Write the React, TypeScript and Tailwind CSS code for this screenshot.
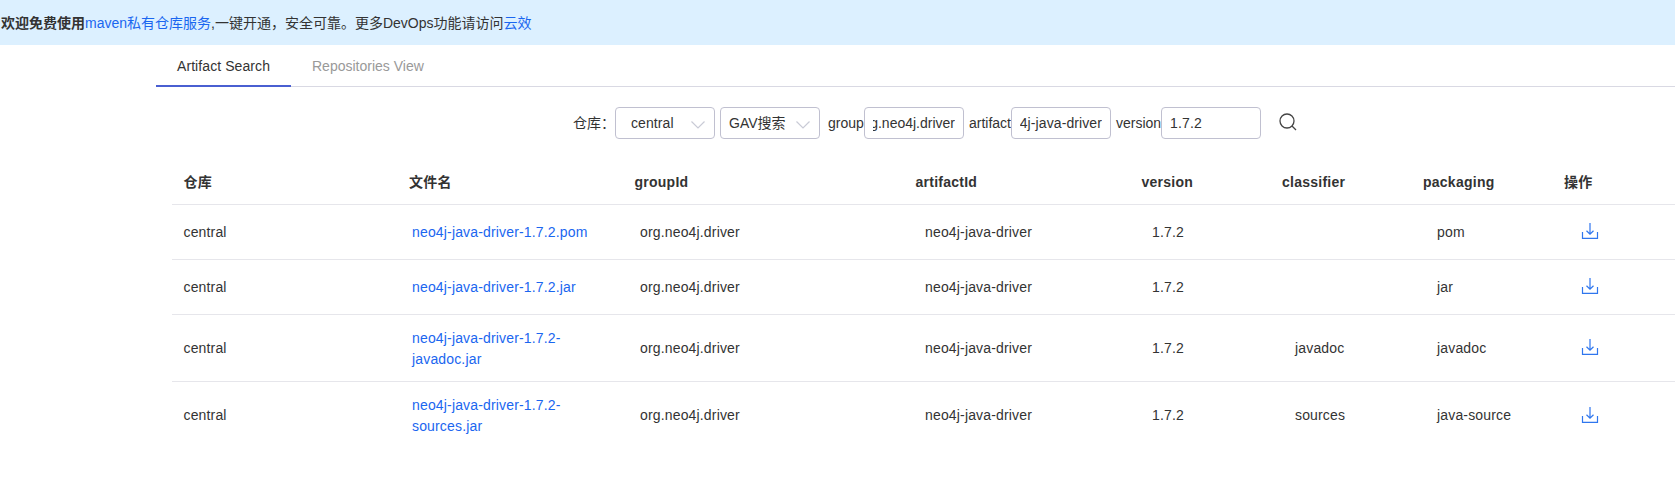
import React from "react";

const headerCols = "grid grid-cols-[225.5px_225.5px_281px_226px_140.5px_141px_141px_1fr]";
const bodyCols = "grid grid-cols-[228px_228px_285px_227px_143px_142px_142px_1fr]";

const headers = ["仓库", "文件名", "groupId", "artifactId", "version", "classifier", "packaging", "操作"];

const rows = [
  { file: "neo4j-java-driver-1.7.2.pom", classifier: "", packaging: "pom" },
  { file: "neo4j-java-driver-1.7.2.jar", classifier: "", packaging: "jar" },
  { file: "neo4j-java-driver-1.7.2-javadoc.jar", classifier: "javadoc", packaging: "javadoc" },
  { file: "neo4j-java-driver-1.7.2-sources.jar", classifier: "sources", packaging: "java-source" },
];

function Chevron() {
  return (
    <svg width="14" height="8" viewBox="0 0 14 8" fill="none" stroke="#c9cbd6" strokeWidth="1.2" className="mt-[3px] shrink-0">
      <path d="M0.5 0.5 L7 7 L13.5 0.5" />
    </svg>
  );
}

function DownloadIcon() {
  return (
    <svg width="18" height="17" viewBox="0 0 18 17" fill="none" stroke="#2f76ee" strokeWidth="1.2">
      <path d="M1.5 9 V15.4 H16.5 V9" />
      <path d="M9 0 V11 M5.5 7.8 L9 11.2 L12.5 7.8" />
    </svg>
  );
}

function Select({ value, className }: { value: string; className: string }) {
  return (
    <div className={`flex h-8 w-[100px] items-center justify-between rounded border border-[#c0c0d0] pr-[9px] ${className}`}>
      <span>{value}</span>
      <Chevron />
    </div>
  );
}

function Field({ value, clipped }: { value: string; clipped?: boolean }) {
  return (
    <div className="flex h-8 w-[100px] items-center rounded border border-[#c0c0d0] bg-white px-2">
      <div className={`flex w-full overflow-hidden whitespace-nowrap ${clipped ? "justify-end" : ""}`}>
        <span className="shrink-0">{value}</span>
      </div>
    </div>
  );
}

export default function App() {
  return (
    <div className="h-[484px] w-full overflow-hidden bg-white font-['Liberation_Sans','Noto_Sans_CJK_SC',sans-serif] text-sm leading-[21px] text-[#333]">
      <div className="flex h-[45px] items-center bg-[#dcf0ff] pt-0.5 pl-px">
        <p>
          <b>欢迎免费使用</b>
          <a className="text-[#1a66f0]">maven私有仓库服务</a>,一键开通，安全可靠。更多DevOps功能请访问
          <a className="text-[#1a66f0]">云效</a>
        </p>
      </div>

      <div className="ml-[156px] flex h-[42px] border-b border-[#d9d9e3]">
        <div className="flex h-[42px] w-[135px] justify-center border-b-2 border-[#4a5fd1] pt-[11px] tracking-[0.08px]">Artifact Search</div>
        <div className="pt-[11px] pl-[21px] text-[#999]">Repositories View</div>
      </div>

      <div className="mt-5 ml-[573px] flex h-8 items-center">
        <span className="w-[42px]">仓库：</span>
        <Select value="central" className="pl-[15px] tracking-[0.1px]" />
        <Select value="GAV搜索" className="ml-[5px] pl-2" />
        <span className="ml-2 w-9">group</span>
        <Field value="org.neo4j.driver" clipped />
        <span className="ml-[5px] w-[42px]">artifact</span>
        <div className="tracking-[0.1px]">
          <Field value="neo4j-java-driver" clipped />
        </div>
        <span className="ml-[5px] w-[45px]">version</span>
        <div className="tracking-[0.15px]">
          <Field value="1.7.2" />
        </div>
        <svg width="18" height="18" viewBox="0 0 18 18" fill="none" stroke="#444" strokeWidth="1.3" className="ml-[17.5px] -mt-[3px]">
          <circle cx="8" cy="8" r="7" />
          <path d="M13 13 L17 17" />
        </svg>
      </div>

      <div className="mt-5 ml-[172px]">
        <div className={`${headerCols} h-[46px] items-center border-b border-[#e6e6eb] pt-0.5 font-bold tracking-[0.25px]`}>
          {headers.map((h) => (
            <div key={h} className="pl-[11.5px]">{h}</div>
          ))}
        </div>
        {rows.map((r, i) => (
          <div
            key={r.file}
            className={`${bodyCols} items-center tracking-[0.16px] ${i < 2 ? "h-[55px]" : "h-[67px]"} ${i < 3 ? "border-b border-[#e6e6eb]" : ""}`}
          >
            <div className="pl-[11.5px]">central</div>
            <div className={`px-3 text-[#1a66f0] ${i === 2 ? "pt-px" : ""}`}>{r.file}</div>
            <div className="pl-3">org.neo4j.driver</div>
            <div className="pl-3">neo4j-java-driver</div>
            <div className="pl-3">1.7.2</div>
            <div className="pl-3">{r.classifier}</div>
            <div className="pl-3">{r.packaging}</div>
            <div className="-mt-px pl-[13.5px]"><DownloadIcon /></div>
          </div>
        ))}
      </div>
    </div>
  );
}
